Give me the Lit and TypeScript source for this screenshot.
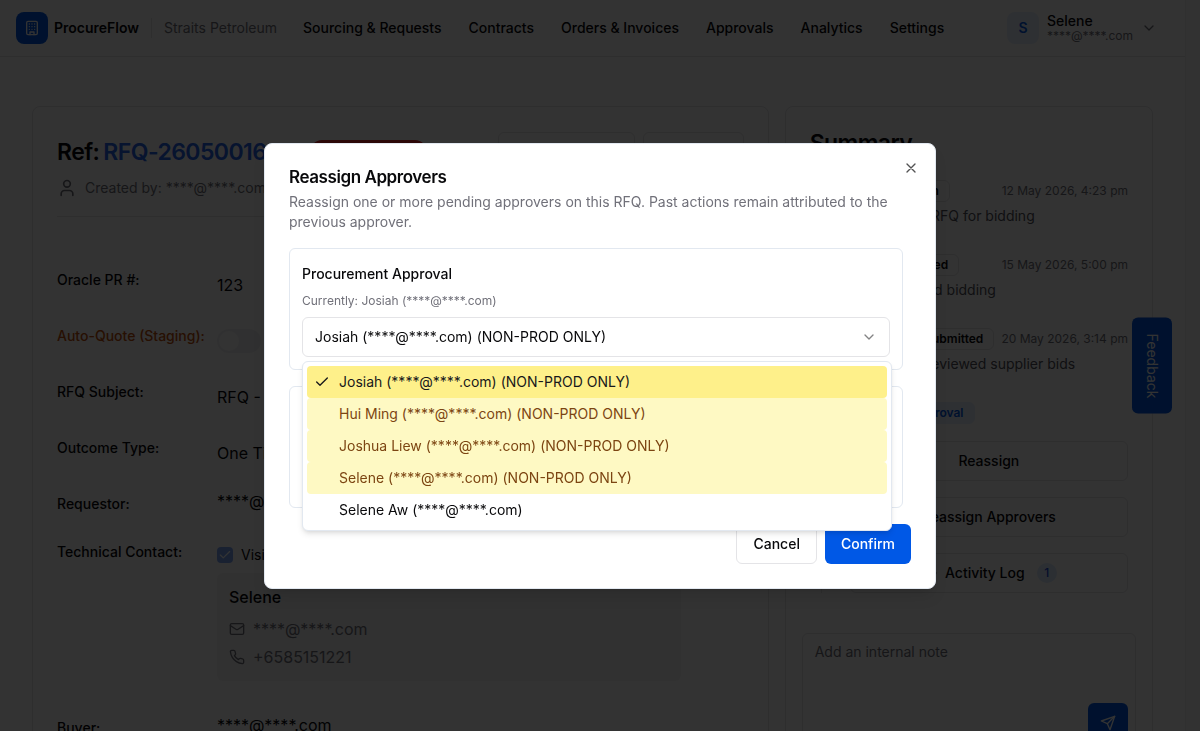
import { LitElement, html, css, svg } from "lit";
import { customElement, state } from "lit/decorators.js";
import { classMap } from "lit/directives/class-map.js";

const icon = (body: unknown, size = 16, width = 2) => html`<svg
  width=${size} height=${size} viewBox="0 0 24 24" fill="none" stroke="currentColor"
  stroke-width=${width} stroke-linecap="round" stroke-linejoin="round" aria-hidden="true">${body}</svg>`;

const building = svg`<rect x="4" y="2" width="16" height="20" rx="2"/><path d="M9 22v-4h6v4M8 6h.01M16 6h.01M12 6h.01M12 10h.01M12 14h.01M16 10h.01M16 14h.01M8 10h.01M8 14h.01"/>`;
const chevron = svg`<path d="m6 9 6 6 6-6"/>`;
const user = svg`<path d="M19 21v-2a4 4 0 0 0-4-4H9a4 4 0 0 0-4 4v2"/><circle cx="12" cy="7" r="4"/>`;
const mail = svg`<rect width="20" height="16" x="2" y="4" rx="2"/><path d="m22 7-8.97 5.7a1.94 1.94 0 0 1-2.06 0L2 7"/>`;
const phone = svg`<path d="M22 16.92v3a2 2 0 0 1-2.18 2 19.79 19.79 0 0 1-8.63-3.07 19.5 19.5 0 0 1-6-6 19.79 19.79 0 0 1-3.07-8.67A2 2 0 0 1 4.11 2h3a2 2 0 0 1 2 1.72 12.84 12.84 0 0 0 .7 2.81 2 2 0 0 1-.45 2.11L8.09 9.91a16 16 0 0 0 6 6l1.27-1.27a2 2 0 0 1 2.11-.45 12.84 12.84 0 0 0 2.81.7A2 2 0 0 1 22 16.92z"/>`;
const check = svg`<path d="M20 6 9 17l-5-5"/>`;
const close = svg`<path d="M18 6 6 18M6 6l12 12"/>`;
const clock = svg`<circle cx="12" cy="12" r="10"/><path d="M12 6v6l4 2"/>`;
const send = svg`<path d="m22 2-7 20-4-9-9-4Z"/><path d="M22 2 11 13"/>`;

const NAV = ["Sourcing & Requests", "Contracts", "Orders & Invoices", "Approvals", "Analytics", "Settings"];

const EVENTS = [
  { status: "Bidding Open", date: "12 May 2026, 4:23 pm", note: "Selene sent RFQ for bidding" },
  { status: "Bidding Closed", date: "15 May 2026, 5:00 pm", note: "Selene closed bidding" },
  { status: "Evaluation Submitted", date: "20 May 2026, 3:14 pm", note: "Selene just reviewed supplier bids" },
];

const APPROVERS = [
  { name: "Josiah (****@****.com) (NON-PROD ONLY)", test: true },
  { name: "Hui Ming (****@****.com) (NON-PROD ONLY)", test: true },
  { name: "Joshua Liew (****@****.com) (NON-PROD ONLY)", test: true },
  { name: "Selene (****@****.com) (NON-PROD ONLY)", test: true },
  { name: "Selene Aw (****@****.com)", test: false },
];

const base = css`
  *, *::before, *::after { box-sizing: border-box; }
  :host { font-family: Inter, "Liberation Sans", sans-serif; font-size: 14px; line-height: 20px; color: #09090b; }
  button, input, select, textarea { font: inherit; color: inherit; margin: 0; }
  button { cursor: pointer; }
  h1, h2, h3, p, ul, dl, dd, dt { margin: 0; padding: 0; }
  svg { display: block; flex: none; }
  .btn { height: 40px; border: 1px solid #e4e4e7; border-radius: 6px; background: #fff; font-weight: 500; padding: 0 16px; display: flex; align-items: center; justify-content: center; gap: 8px; }
`;

@customElement("top-bar")
class TopBar extends LitElement {
  static styles = [base, css`
    :host { display: block; }
    .bar { display: flex; align-items: center; height: 57px; padding: 0 16px; border-bottom: 1px solid #e4e4e7; background: #fff; white-space: nowrap; }
    .logo { width: 32px; height: 32px; border-radius: 8px; background: #0058e6; color: #fff; display: grid; place-items: center; }
    .brand { font-weight: 600; margin-left: 6px; }
    .org { margin-left: 12px; padding-left: 12px; color: #71717a; border-left: 1px solid #e4e4e7; }
    nav { display: flex; gap: 27px; margin-left: 26px; }
    nav a { color: inherit; text-decoration: none; font-weight: 500; }
    .account { margin-left: auto; display: flex; align-items: center; gap: 8px; border: 0; background: none; padding: 0 12px 0 0; text-align: left; }
    .avatar { width: 32px; height: 32px; border-radius: 8px; background: #e6effd; color: #0058e6; font-weight: 600; display: grid; place-items: center; }
    .who { display: grid; line-height: 16px; }
    .who .name { font-weight: 500; }
    .mail { font-size: 12px; line-height: 14px; color: #71717a; }
    .caret { color: #71717a; }
  `];
  render() {
    return html`<header class="bar">
      <span class="logo">${icon(building, 16, 2)}</span>
      <span class="brand">ProcureFlow</span>
      <span class="org">Straits Petroleum</span>
      <nav>${NAV.map((n) => html`<a href="#">${n}</a>`)}</nav>
      <button class="account" type="button">
        <span class="avatar">S</span>
        <span class="who"><span class="name">Selene</span><span class="mail">****@****.com</span></span>
        <span class="caret">${icon(chevron)}</span>
      </button>
    </header>`;
  }
}

@customElement("rfq-details")
class RfqDetails extends LitElement {
  static styles = [base, css`
    :host { display: block; border: 1px solid #e4e4e7; border-radius: 8px; background: #fff; padding: 24px; }
    .head { display: flex; align-items: center; gap: 8px; height: 42px; white-space: nowrap; }
    h1 { font-size: 23px; line-height: 32px; font-weight: 600; letter-spacing: -0.025em; display: flex; gap: 4px; }
    h1 a { color: #2563eb; text-decoration: none; }
    .state { height: 24px; border-radius: 12px; background: #dc2626; color: #fff; font-size: 12px; font-weight: 600; line-height: 24px; padding: 0 12px; margin: 0 auto 0 8px; }
    .by { display: flex; align-items: center; gap: 8px; height: 20px; margin-top: 5px; color: #71717a; }
    hr { border: 0; border-top: 1px solid #e4e4e7; margin: 18px 0 40px; }
    .row { display: grid; grid-template-columns: 160px minmax(0, 1fr); }
    dt { padding-top: 13px; font-weight: 500; white-space: nowrap; }
    dd { font-size: 16px; line-height: 24px; padding: 16px 0; }
    .person dd { padding: 8px 0 16px; }
    .staging { color: #c2500c; }
    .switch { appearance: none; display: block; width: 44px; height: 24px; border-radius: 12px; background: #e4e4e7; padding: 2px; opacity: 0.5; }
    .switch::before { content: ""; display: block; width: 20px; height: 20px; border-radius: 50%; background: #fff; }
    .contact { padding: 18px 0 24px 0; }
    .visible { display: flex; align-items: center; gap: 8px; height: 16px; font-size: 14px; line-height: 16px; position: relative; }
    .visible input { appearance: none; width: 16px; height: 16px; border-radius: 4px; background: #7fa7f5; }
    .tick { position: absolute; left: 1px; top: 1px; color: #fff; pointer-events: none; }
    .box { margin: 10px 63px 0 0; background: #f4f4f5; border-radius: 6px; padding: 12px; display: grid; gap: 4px; }
    .box .nm { font-weight: 500; margin-bottom: 4px; }
    .line { display: flex; align-items: center; gap: 8px; color: #71717a; }
  `];
  render() {
    return html`
      <div class="head">
        <h1><span>Ref:</span><a href="#">RFQ-2605001639</a></h1>
        <span class="state">Pending Review</span>
        <button class="btn" type="button">Mark Complete</button>
        <button class="btn" type="button">Download</button>
      </div>
      <p class="by">${icon(user, 20, 2)}<span>Created by: ****@****.com</span></p>
      <hr />
      <dl>
        <div class="row"><dt>Oracle PR #:</dt><dd>123</dd></div>
        <div class="row"><dt class="staging">Auto-Quote (Staging):</dt><dd><input class="switch" type="checkbox" role="switch" disabled aria-label="Auto-Quote (Staging)" /></dd></div>
        <div class="row"><dt>RFQ Subject:</dt><dd>RFQ - Pumps</dd></div>
        <div class="row"><dt>Outcome Type:</dt><dd>One Time</dd></div>
        <div class="row person"><dt>Requestor:</dt><dd>****@****.com</dd></div>
        <div class="row"><dt>Technical Contact:</dt><dd class="contact">
          <label class="visible"><input type="checkbox" checked disabled /><span class="tick">${icon(check, 14)}</span>Visible to suppliers</label>
          <div class="box">
            <div class="nm">Selene</div>
            <div class="line">${icon(mail)}<span>****@****.com</span></div>
            <div class="line">${icon(phone)}<span>+6585151221</span></div>
          </div></dd></div>
        <div class="row person"><dt>Buyer:</dt><dd>****@****.com</dd></div>
      </dl>`;
  }
}

@customElement("rfq-summary")
class RfqSummary extends LitElement {
  static styles = [base, css`
    :host { display: block; border: 1px solid #e4e4e7; border-radius: 8px; background: #fff; padding: 24px 16px; }
    h2 { font-size: 23px; line-height: 24px; font-weight: 600; letter-spacing: -0.025em; padding-left: 8px; margin-bottom: 25px; }
    .track { margin: 0 8px 0 19px; border-left: 1px solid #e4e4e7; padding-left: 28px; }
    .event { padding-bottom: 28px; }
    .top { display: flex; align-items: center; justify-content: space-between; height: 22px; white-space: nowrap; }
    .badge { display: inline-block; border: 1px solid #e4e4e7; border-radius: 6px; padding: 0 10px; font-size: 12px; line-height: 20px; font-weight: 600; }
    .blue { background: #e6effd; border-color: #e6effd; color: #0058e6; }
    time { font-size: 12px; color: #71717a; }
    .note { margin-top: 4px; color: #52525b; white-space: nowrap; }
    .actions { display: grid; gap: 16px; margin-top: 17px; }
    .count { min-width: 20px; height: 20px; border-radius: 10px; background: #dbeafe; color: #1d4ed8; font-size: 12px; line-height: 20px; margin-left: 4px; }
    .composer { position: relative; margin-top: 40px; }
    textarea { display: block; width: 100%; height: 120px; resize: none; border: 1px solid #e4e4e7; border-radius: 6px; padding: 8px 12px; background: #fff; }
    textarea::placeholder { color: #71717a; }
    .send { position: absolute; right: 8px; bottom: 10px; width: 40px; height: 40px; border: 0; border-radius: 6px; background: #0058e6; color: #fff; display: grid; place-items: center; }
  `];
  render() {
    return html`
      <h2>Summary</h2>
      <div class="track">
        ${EVENTS.map((e) => html`<div class="event">
          <div class="top"><span class="badge">${e.status}</span><time>${e.date}</time></div>
          <p class="note">${e.note}</p>
        </div>`)}
        <span class="badge blue">Pending Approval</span>
        <div class="actions">
          <button class="btn" type="button">Reassign</button>
          <button class="btn" type="button">Reassign Approvers</button>
          <button class="btn" type="button">${icon(clock)}Activity Log<span class="count">1</span></button>
        </div>
      </div>
      <div class="composer">
        <textarea placeholder="Add an internal note" aria-label="Internal note"></textarea>
        <button class="send" type="button" aria-label="Send note">${icon(send)}</button>
      </div>`;
  }
}

@customElement("reassign-dialog")
class ReassignDialog extends LitElement {
  @state() chosen = 0;
  static styles = [base, css`
    :host { display: block; width: 100%; max-width: 672px; position: relative; background: #fff; border: 1px solid #e2e8f0; border-radius: 8px; padding: 24px; box-shadow: 0 10px 15px -3px rgb(0 0 0 / 0.1), 0 4px 6px -4px rgb(0 0 0 / 0.1); }
    h2 { font-size: 17px; line-height: 18px; font-weight: 600; letter-spacing: -0.025em; }
    .lead { margin-top: 6px; color: #71717a; }
    .close { position: absolute; right: 16px; top: 16px; border: 0; padding: 0; background: none; opacity: 0.7; }
    .stages { display: grid; gap: 16px; margin-top: 16px; padding-right: 8px; }
    .stage { border: 1px solid #e2e8f0; border-radius: 6px; padding: 12px; }
    label { display: block; font-weight: 500; padding: 3px 0 1px; }
    .current { font-size: 12px; line-height: 16px; color: #71717a; margin: 8px 0; }
    .field { position: relative; }
    select { appearance: none; display: block; width: 100%; height: 40px; border: 1px solid #e4e4e7; border-radius: 6px; background: #fff; padding: 0 40px 0 12px; }
    .caret { position: absolute; right: 13px; top: 12px; opacity: 0.5; pointer-events: none; }
    .menu { position: absolute; z-index: 2; top: calc(100% + 4px); left: 0; right: -2px; list-style: none; background: #fff; border: 1px solid #e2e8f0; border-radius: 6px; padding: 4px; box-shadow: 0 4px 6px -1px rgb(0 0 0 / 0.1), 0 2px 4px -2px rgb(0 0 0 / 0.1); }
    .item { display: flex; align-items: center; height: 32px; padding: 0 8px 0 32px; border-radius: 4px; position: relative; cursor: default; }
    .item.test { background: #fef9c3; color: #7c4512; }
    .item.on { background: #fef08a; color: #18181b; }
    .mark { position: absolute; left: 7px; }
    .foot { display: flex; justify-content: flex-end; gap: 8px; margin-top: 16px; }
    .primary { background: #0058e6; border: 0; color: #fff; }
  `];
  render() {
    return html`
      <h2 id="title">Reassign Approvers</h2>
      <p class="lead">Reassign one or more pending approvers on this RFQ. Past actions remain attributed to the previous approver.</p>
      <button class="close" type="button" aria-label="Close">${icon(close)}</button>
      <div class="stages">
        <div class="stage">
          <label for="first">Procurement Approval</label>
          <p class="current">Currently: Josiah (****@****.com)</p>
          <div class="field">
            <select id="first" .selectedIndex=${this.chosen}>${APPROVERS.map((a, i) => html`<option ?selected=${i === this.chosen}>${a.name}</option>`)}</select>
            <span class="caret">${icon(chevron)}</span>
            <ul class="menu" role="listbox" aria-label="Procurement Approval">
              ${APPROVERS.map((a, i) => html`<li role="option" aria-selected=${i === this.chosen}
                class=${classMap({ item: true, test: a.test, on: i === this.chosen })}
                @click=${() => (this.chosen = i)}>
                ${i === this.chosen ? html`<span class="mark">${icon(check)}</span>` : ""}${a.name}</li>`)}
            </ul>
          </div>
        </div>
        <div class="stage">
          <label for="second">Finance Approval</label>
          <p class="current">Currently: Selene (****@****.com)</p>
          <div class="field">
            <select id="second">${APPROVERS.map((a) => html`<option>${a.name}</option>`)}</select>
            <span class="caret">${icon(chevron)}</span>
          </div>
        </div>
      </div>
      <div class="foot">
        <button class="btn" type="button">Cancel</button>
        <button class="btn primary" type="button">Confirm</button>
      </div>`;
  }
}

@customElement("app-root")
class AppRoot extends LitElement {
  static styles = [base, css`
    :host { display: block; height: 100vh; overflow: hidden; background: #fff; }
    .shell { display: grid; grid-template-columns: minmax(0, 1fr) 15px; height: 100%; }
    .page { overflow: hidden; }
    .gutter { background: #fafafa; border-left: 1px solid #ededed; }
    main { display: grid; grid-template-columns: minmax(0, 2fr) minmax(0, 1fr); gap: 16px; align-items: start; padding: 49px 32px 48px; }
    .feedback { position: fixed; right: 28px; top: 50%; transform: translateY(-50%); width: 40px; padding: 16px 0; border: 0; border-radius: 6px; background: #0058e6; color: #fff; writing-mode: vertical-rl; line-height: 40px; }
    .overlay { position: fixed; inset: 0; z-index: 5; background: rgb(0 0 0 / 0.8); display: grid; align-content: center; justify-items: center; }
  `];
  render() {
    return html`
      <div class="shell">
        <div class="page">
          <top-bar></top-bar>
          <main><rfq-details></rfq-details><rfq-summary></rfq-summary></main>
        </div>
        <div class="gutter"></div>
      </div>
      <button class="feedback" type="button">Feedback</button>
      <div class="overlay"><reassign-dialog role="dialog" aria-modal="true" aria-label="Reassign Approvers"></reassign-dialog></div>`;
  }
}
